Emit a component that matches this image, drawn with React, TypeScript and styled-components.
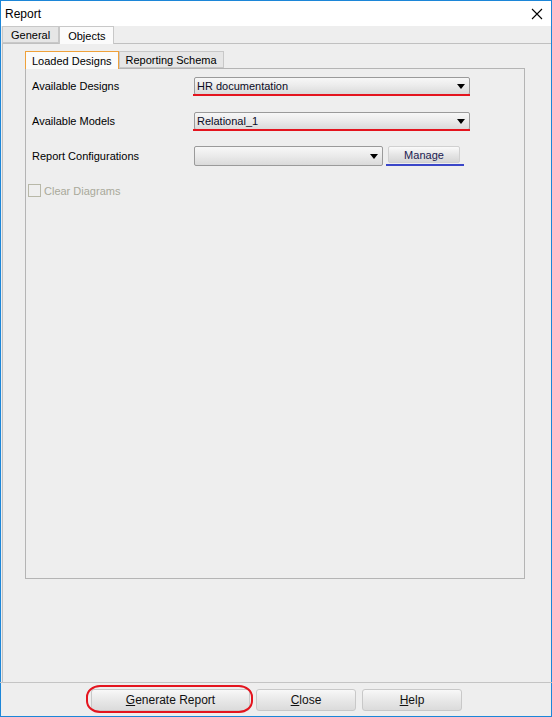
import React from "react";
import styled, { createGlobalStyle } from "styled-components";

const Global = createGlobalStyle`
  html, body { margin: 0; padding: 0; background: #ffffff; }
  * { box-sizing: border-box; }
`;

const Window = styled.div`
  width: 552px;
  height: 717px;
  border: 1px solid #1c86d8;
  border-top: none;
  display: flex;
  flex-direction: column;
  font-family: "Liberation Sans", Arial, sans-serif;
  font-size: 11px;
  color: #000;
  background: #eeeeee;
`;

const TitleBar = styled.div`
  height: 26px;
  background: #ffffff;
  border-top: 1px solid #1c86d8;
  display: flex;
  align-items: center;
  justify-content: space-between;
  padding: 0 8px 0 4px;
  font-size: 12px;
`;

const CloseIcon = styled.svg`
  width: 12px;
  height: 12px;
  margin-top: 1px;
`;

const OuterTabs = styled.div`
  display: flex;
  height: 17px;
  padding-left: 1px;
  align-items: flex-end;
`;

const Tab = styled.div<{ $active?: boolean; $accent?: boolean }>`
  height: ${(p) => (p.$active ? "18px" : "17px")};
  margin-bottom: ${(p) => (p.$active ? "-1px" : "0")};
  padding: 0 8px;
  display: flex;
  align-items: center;
  background: ${(p) => (p.$active ? "#fbfbfb" : "#e6e6e6")};
  border: 1px solid ${(p) => (p.$accent ? "#efa13a" : "#c8c8c8")};
  border-bottom: ${(p) => (p.$active ? "none" : undefined)};
  position: relative;
  z-index: ${(p) => (p.$active ? 1 : 0)};
  white-space: nowrap;
`;

const OuterPanel = styled.div`
  flex: 1;
  margin-left: 1px;
  border-top: 1px solid #c0c0c0;
  border-left: 1px solid #c0c0c0;
  padding: 7px 26px 103px 22px;
  display: flex;
  flex-direction: column;
`;

const InnerTabs = styled.div`
  display: flex;
  height: 17px;
  align-items: flex-end;
`;

const InnerTab = styled(Tab)`
  padding: 0 6px;
`;

const InnerPanel = styled.div`
  flex: 1;
  border: 1px solid #b4b4b4;
  background: #eeeeee;
  padding: 8px 0 0 6px;
  display: flex;
  flex-direction: column;
`;

const FormGrid = styled.div`
  display: grid;
  grid-template-columns: 162px auto;
`;

const Label = styled.div<{ $h: number; $lh: number }>`
  height: ${(p) => p.$h}px;
  line-height: ${(p) => p.$lh}px;
`;

const Field = styled.div<{ $h: number }>`
  height: ${(p) => p.$h}px;
  display: flex;
  align-items: flex-start;
  gap: 5px;
`;

const ComboWrap = styled.div`
  position: relative;
`;

const Combo = styled.div<{ $w: number; $h: number }>`
  width: ${(p) => p.$w}px;
  height: ${(p) => p.$h}px;
  border: 1px solid #9a9a9a;
  border-radius: 2px;
  background: linear-gradient(#f7f7f7, #ececec 45%, #dadada);
  display: flex;
  align-items: center;
  justify-content: space-between;
  padding: 0 4px 0 2px;
  color: #0a0a1e;
`;

const Arrow = styled.span`
  width: 0;
  height: 0;
  border-left: 4px solid transparent;
  border-right: 4px solid transparent;
  border-top: 5px solid #000;
`;

const Underline = styled.div<{ $color: string; $left: number; $right: number; $top: number }>`
  position: absolute;
  left: ${(p) => p.$left}px;
  right: ${(p) => p.$right}px;
  top: ${(p) => p.$top}px;
  height: 2px;
  background: ${(p) => p.$color};
`;

const SmallButton = styled.div`
  width: 72px;
  height: 17px;
  border: 1px solid #d0d0d0;
  border-radius: 2px;
  background: linear-gradient(#fafafa, #e6e6e6 50%, #d6d6d6);
  display: flex;
  align-items: center;
  justify-content: center;
  color: #1a1a50;
`;

const CheckRow = styled.div`
  display: flex;
  align-items: center;
  gap: 3px;
  margin: 18px 0 0 -4px;
  color: #a9a99a;
`;

const CheckBox = styled.div`
  width: 13px;
  height: 13px;
  border: 1px solid #b8b8a8;
  background: #efefef;
`;

const Footer = styled.div`
  height: 34px;
  border-top: 1px solid #c4c4c4;
  margin-left: -1px;
  margin-right: -1px;
  display: flex;
  justify-content: center;
  gap: 6px;
  padding-top: 6px;
  padding-left: 1px;
`;

const Button = styled.div<{ $w: number }>`
  position: relative;
  width: ${(p) => p.$w}px;
  height: 22px;
  border: 1px solid #c8c8c8;
  border-radius: 3px;
  background: linear-gradient(#f8f8f8, #e8e8e8 50%, #dbdbdb);
  display: flex;
  align-items: center;
  justify-content: center;
  font-size: 12px;
  color: #111;
`;

const Mn = styled.span`
  text-decoration: underline;
`;

const Ellipse = styled.div`
  position: absolute;
  left: -6px;
  right: -4px;
  top: -5px;
  bottom: -3px;
  border: 2px solid #e4141e;
  border-radius: 14px / 12px;
  pointer-events: none;
`;

export default function App() {
  return (
    <>
      <Global />
      <Window>
        <TitleBar>
          <span>Report</span>
          <CloseIcon viewBox="0 0 12 12">
            <path d="M1 1 L11 11 M11 1 L1 11" stroke="#000" strokeWidth="1.1" />
          </CloseIcon>
        </TitleBar>
        <OuterTabs>
          <Tab>General</Tab>
          <Tab $active>Objects</Tab>
        </OuterTabs>
        <OuterPanel>
          <InnerTabs>
            <InnerTab $active $accent>Loaded Designs</InnerTab>
            <InnerTab>Reporting Schema</InnerTab>
          </InnerTabs>
          <InnerPanel>
            <FormGrid>
              <Label $h={35} $lh={18}>Available Designs</Label>
              <Field $h={35}>
                <ComboWrap>
                  <Combo $w={276} $h={18}>
                    <span>HR documentation</span>
                    <Arrow />
                  </Combo>
                  <Underline $color="#e4141e" $left={-1} $right={0} $top={17} />
                </ComboWrap>
              </Field>
              <Label $h={34} $lh={18}>Available Models</Label>
              <Field $h={34}>
                <ComboWrap>
                  <Combo $w={276} $h={18}>
                    <span>Relational_1</span>
                    <Arrow />
                  </Combo>
                  <Underline $color="#e4141e" $left={-1} $right={0} $top={17} />
                </ComboWrap>
              </Field>
              <Label $h={20} $lh={20}>Report Configurations</Label>
              <Field $h={20}>
                <Combo $w={189} $h={20}>
                  <span />
                  <Arrow />
                </Combo>
                <ComboWrap>
                  <SmallButton>Manage</SmallButton>
                  <Underline $color="#3a46c8" $left={-2} $right={-4} $top={18} />
                </ComboWrap>
              </Field>
            </FormGrid>
            <CheckRow>
              <CheckBox />
              <span>Clear Diagrams</span>
            </CheckRow>
          </InnerPanel>
        </OuterPanel>
        <Footer>
          <Button $w={159}>
            <span>
              <Mn>G</Mn>enerate Report
            </span>
            <Ellipse />
          </Button>
          <Button $w={100}>
            <span>
              <Mn>C</Mn>lose
            </span>
          </Button>
          <Button $w={100}>
            <span>
              <Mn>H</Mn>elp
            </span>
          </Button>
        </Footer>
      </Window>
    </>
  );
}
